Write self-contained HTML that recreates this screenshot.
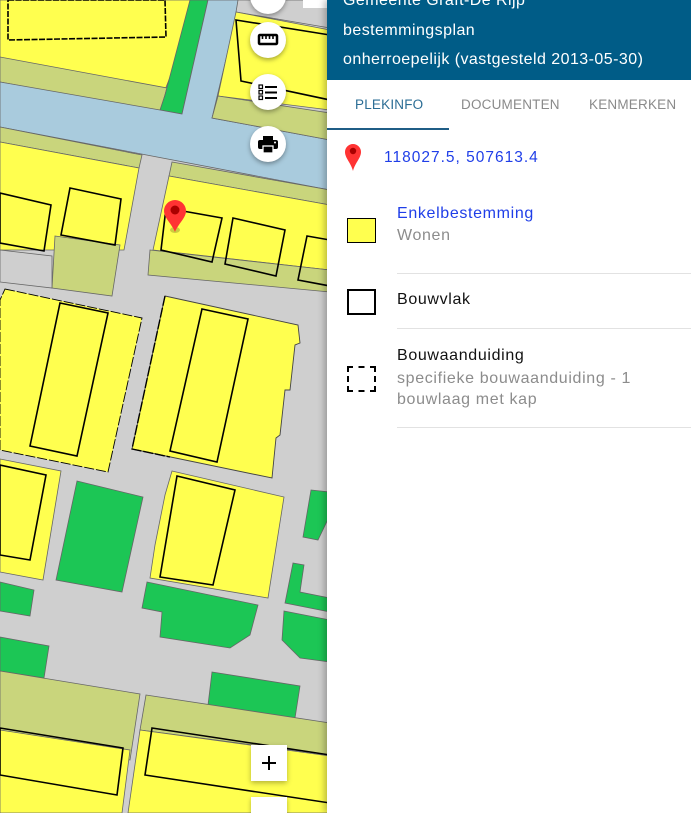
<!DOCTYPE html>
<html><head><meta charset="utf-8"><style>
*{margin:0;padding:0;box-sizing:border-box}
html,body{width:691px;height:813px;overflow:hidden}
body{position:relative;font-family:"Liberation Sans",sans-serif;background:#fff}
#map{position:absolute;left:0;top:0;width:330px;height:813px}
.side{position:absolute;left:327px;top:0;width:364px;height:813px;background:#fff;box-shadow:-3px 0 6px rgba(0,0,0,.25)}
.hdr{height:80px;background:#005c87;color:#fff;font-size:16px;letter-spacing:.45px;position:relative}
.hdr div{position:absolute;left:16px;white-space:nowrap}
.tab{position:absolute;top:97px;font-size:13.5px;color:#8a8a8a;letter-spacing:.2px}
.lbl{position:absolute;white-space:nowrap;font-size:16px;letter-spacing:.65px}
.div{position:absolute;left:70px;right:0;height:1px;background:#e2e2e2}
.btn{position:absolute;width:36px;height:36px;border-radius:50%;background:#fff;box-shadow:0 2px 5px rgba(0,0,0,.35)}
.sq{position:absolute;width:36px;height:36px;background:#fff;box-shadow:0 2px 5px rgba(0,0,0,.3)}
</style></head><body>
<svg id="map" width="330" height="813" viewBox="0 0 330 813">
<rect width="330" height="813" fill="#cfcfcf"/>
<g stroke="#666" stroke-width="0.8">
<polygon points="0,0 200,0 165,90 0,58" fill="#ffff4f"/>
<polygon points="0,57 167,88 160,112 0,82" fill="#c9d57c"/>
<polygon points="190,0 208,0 182,114 160,110 165,95" fill="#1cc655"/>
<polygon points="0,82 160,110 182,114 208,0 240,0 212,118 330,140 330,190 0,127" fill="#a9cbdd"/>
<polygon points="238,0 330,0 330,28 236,12" fill="#cfcfcf"/>
<polygon points="236,12 330,30 330,110 218,96" fill="#ffff4f"/>
<polygon points="218,96 330,113 330,140 212,118" fill="#c9d57c"/>
<polygon points="0,127 142,155 139,168 0,142" fill="#c9d57c"/>
<polygon points="0,142 139,168 124,250 0,250" fill="#ffff4f"/>
<polygon points="55,236 120,245 112,296 52,288" fill="#c9d57c"/>
<polygon points="0,250 52,256 52,288 0,282" fill="#cfcfcf"/>
<polygon points="172,162 330,190 330,205 169,176" fill="#c9d57c"/>
<polygon points="169,176 330,205 330,270 153,250" fill="#ffff4f"/>
<polygon points="150,250 330,270 330,292 148,275" fill="#c9d57c"/>
<polygon points="0,459 61,471 43,580 0,572" fill="#ffff4f"/>
<polygon points="77,481 143,497 122,592 56,580" fill="#1cc655"/>
<polygon points="172,471 284,497 268,598 150,578 155,545 160,520 165,495" fill="#ffff4f"/>
<polygon points="311,490 330,492 330,515 318,540 303,537" fill="#1cc655"/>
<polygon points="147,582 258,605 250,635 230,648 160,637 162,612 142,608" fill="#1cc655"/>
<polygon points="0,582 34,590 30,616 0,611" fill="#1cc655"/>
<polygon points="0,637 49,646 44,678 0,671" fill="#1cc655"/>
<polygon points="293,563 304,565 300,592 330,598 330,612 285,603" fill="#1cc655"/>
<polygon points="284,611 330,620 330,662 300,658 282,640" fill="#1cc655"/>
<polygon points="212,672 300,686 295,718 208,705" fill="#1cc655"/>
<polygon points="0,671 140,694 130,760 0,730" fill="#c9d57c"/>
<polygon points="146,695 330,723 330,755 140,730" fill="#c9d57c"/>
<polygon points="0,730 130,750 122,813 0,813" fill="#ffff4f"/>
<polygon points="140,730 330,756 330,813 128,813" fill="#ffff4f"/>
</g>
<g stroke-width="0.9" fill="#ffff4f">
<polygon points="5,289 142,318 108,472 0,450 0,300" stroke="#000" stroke-dasharray="10,2"/>
<polygon points="165,296 298,325 300,343 295,345 290,390 285,390 280,435 276,438 272,478 132,449" stroke="#444"/>
<path d="M165,296 L132,449 L170,457" fill="none" stroke="#000" stroke-width="1.4" stroke-dasharray="10,2"/>
</g>
<g fill="none" stroke="#000" stroke-width="1.6">
<polygon points="8,0 165,0 166,37 8,40" stroke-dasharray="6,1.5"/>
<polygon points="236,20 330,35 330,100 241,81"/>
<polygon points="0,193 51,205 44,251 0,243"/>
<polygon points="70,188 121,199 115,245 61,235"/>
<polygon points="166,208 222,218 212,262 161,250"/>
<polygon points="233,218 285,230 276,276 225,264"/>
<polygon points="307,236 330,240 330,286 298,280"/>
<polygon points="60,303 108,313 77,456 30,446"/>
<polygon points="202,309 248,319 217,462 170,451"/>
<polygon points="0,465 46,475 30,560 0,555"/>
<polygon points="177,476 235,490 213,585 160,577"/>
<polygon points="0,728 123,748 117,795 0,775"/>
<polygon points="152,728 330,755 330,803 145,775"/>
</g>
<g transform="translate(175,200)">
<ellipse cx="0" cy="30" rx="5" ry="3" fill="rgba(0,0,0,.2)"/>
<path d="M0,32 C-3,24 -11,18 -11,11 A11,11 0 0 1 11,11 C11,18 3,24 0,32Z" fill="#f33" />
<circle cx="0" cy="10" r="4.5" fill="#a00"/>
</g>
</svg>
<div class="btn" style="left:250px;top:-22px"></div>
<div style="position:absolute;left:303px;top:0;width:24px;height:8px;background:#fff"></div>
<div class="btn" style="left:250px;top:22px"><svg width="36" height="36"><rect x="9" y="13" width="18" height="9" rx="1" fill="none" stroke="#000" stroke-width="2.5"/><path d="M12.5 13v4M16 13v4M19.5 13v4M23 13v4" stroke="#000" stroke-width="1.6"/></svg></div>
<div class="btn" style="left:250px;top:74px"><svg width="36" height="36"><rect x="9" y="11" width="3.5" height="3.5" fill="none" stroke="#000" stroke-width="1.2"/><rect x="9" y="16.5" width="3.5" height="3.5" fill="none" stroke="#000" stroke-width="1.2"/><rect x="9" y="22" width="3.5" height="3.5" fill="none" stroke="#000" stroke-width="1.2"/><path d="M15 13h12M15 18.5h12M15 24h12" stroke="#000" stroke-width="2"/></svg></div>
<div class="btn" style="left:250px;top:126px"><svg width="36" height="36"><rect x="13" y="10" width="10" height="4" fill="#000"/><rect x="8" y="14" width="20" height="9" rx="2" fill="#000"/><rect x="13" y="20" width="10" height="7" fill="#000" stroke="#fff" stroke-width="1.3"/><circle cx="25" cy="16.5" r="1" fill="#fff"/></svg></div>
<div class="sq" style="left:251px;top:745px"><svg width="36" height="36"><path d="M18 11v14M11 18h14" stroke="#000" stroke-width="2"/></svg></div>
<div class="sq" style="left:251px;top:797px;height:16px"></div>
<div class="side">
<div class="hdr">
<div style="top:-8px">Gemeente Graft-De Rijp</div>
<div style="top:22px">bestemmingsplan</div>
<div style="top:51px">onherroepelijk (vastgesteld 2013-05-30)</div>
</div>
<div class="tab" style="left:28px;color:#2b6d95">PLEKINFO</div>
<div class="tab" style="left:134px">DOCUMENTEN</div>
<div class="tab" style="left:262px">KENMERKEN</div>
<div style="position:absolute;left:0;top:128px;width:122px;height:2px;background:#1f5d86"></div>
<svg style="position:absolute;left:17px;top:143px" width="20" height="32"><path d="M9,28 C7,20 1,15 1,9 A8,8 0 0 1 17,9 C17,15 11,20 9,28Z" fill="#f33"/><circle cx="9" cy="8" r="3.2" fill="#a00"/></svg>
<div class="lbl" style="left:57px;top:149px;color:#1f3ee8;font-size:15.5px;letter-spacing:1px">118027.5, 507613.4</div>
<div style="position:absolute;left:20px;top:218px;width:29px;height:25px;background:#ffff4f;border:1px solid #000"></div>
<div class="lbl" style="left:70px;top:205px;color:#1f3ee8">Enkelbestemming</div>
<div class="lbl" style="left:70px;top:227px;color:#8c8c8c">Wonen</div>
<div class="div" style="top:273px"></div>
<div style="position:absolute;left:20px;top:289px;width:29px;height:26px;border:2px solid #000"></div>
<div class="lbl" style="left:70px;top:291px;color:#111">Bouwvlak</div>
<div class="div" style="top:328px"></div>
<div style="position:absolute;left:20px;top:366px;width:29px;height:26px;border:2px dashed #000"></div>
<div class="lbl" style="left:70px;top:347px;color:#111">Bouwaanduiding</div>
<div class="lbl" style="left:70px;top:370px;color:#8c8c8c">specifieke bouwaanduiding - 1</div>
<div class="lbl" style="left:70px;top:391px;color:#8c8c8c">bouwlaag met kap</div>
<div class="div" style="top:427px"></div>
</div>
</body></html>
